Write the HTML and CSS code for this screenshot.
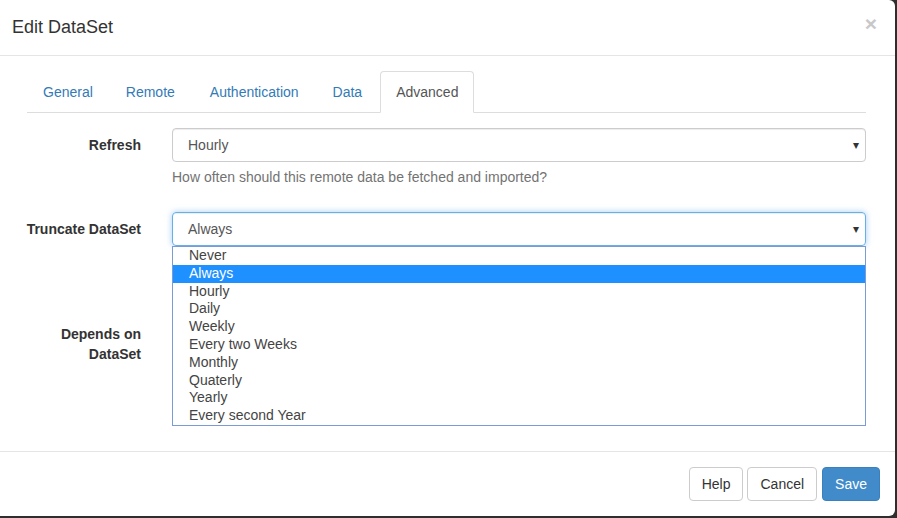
FILE: index.html
```html
<!DOCTYPE html>
<html lang="en">
<head>
<meta charset="utf-8">
<title>Edit DataSet</title>
<link rel="stylesheet" href="styles.css">
</head>
<body>
<div class="modal">
  <div class="modal-header">
    <h4 class="modal-title">Edit DataSet</h4>
    <span class="close">&times;</span>
  </div>
  <div class="modal-body">
    <ul class="tabs">
      <li><a>General</a></li>
      <li><a>Remote</a></li>
      <li><a>Authentication</a></li>
      <li><a>Data</a></li>
      <li class="active"><a>Advanced</a></li>
    </ul>
    <div class="form">
      <div class="group g-refresh">
        <label class="lbl">Refresh</label>
        <div class="ctrl">
          <div class="select">Hourly<span class="caret">&#9662;</span></div>
          <p class="help">How often should this remote data be fetched and imported?</p>
        </div>
      </div>
      <div class="group g-truncate">
        <label class="lbl">Truncate DataSet</label>
        <div class="ctrl">
          <div class="select focus">Always<span class="caret">&#9662;</span></div>
          <ul class="listbox">
            <li>Never</li>
            <li class="sel">Always</li>
            <li>Hourly</li>
            <li>Daily</li>
            <li>Weekly</li>
            <li>Every two Weeks</li>
            <li>Monthly</li>
            <li>Quaterly</li>
            <li>Yearly</li>
            <li>Every second Year</li>
          </ul>
        </div>
      </div>
      <div class="group g-depends">
        <label class="lbl">Depends on<br>DataSet</label>
        <div class="ctrl"></div>
      </div>
    </div>
  </div>
  <div class="modal-footer">
    <button class="btn">Help</button>
    <button class="btn">Cancel</button>
    <button class="btn primary">Save</button>
  </div>
</div>
</body>
</html>
```
FILE: styles.css
```css
* { box-sizing: border-box; }
html, body { margin: 0; padding: 0; }
body {
  background: #2e2e2e;
  width: 897px;
  height: 518px;
  overflow: hidden;
  font-family: "Liberation Sans", Arial, sans-serif;
  font-size: 14px;
  color: #333;
  line-height: 20px;
}
.modal {
  width: 895px;
  height: 516px;
  background: #fff;
  border-radius: 0 6px 6px 0;
  display: flex;
  flex-direction: column;
}
.modal-header {
  height: 56px;
  border-bottom: 1px solid #e5e5e5;
  padding: 15px 15px 0 12px;
  display: flex;
  justify-content: space-between;
}
.modal-title {
  margin: 0;
  font-size: 18px;
  font-weight: normal;
  line-height: 25px;
  color: #333;
}
.close {
  font-size: 21px;
  font-weight: bold;
  color: #c8c8c8;
  line-height: 18px;
  margin-right: 3px;
}
.modal-body {
  flex: 1;
  padding: 15px 29px 0 27px;
}
.tabs {
  list-style: none;
  margin: 0;
  padding: 0;
  display: flex;
  border-bottom: 1px solid #ddd;
  height: 42px;
}
.tabs li { margin-right: 2px; }
.tabs a {
  display: block;
  padding: 10px 15px;
  line-height: 20px;
  color: #337ab7;
  border: 1px solid transparent;
  border-radius: 4px 4px 0 0;
}
.tabs li:nth-child(2) a { padding-left: 14px; padding-right: 16px; }
.tabs .active a {
  color: #555;
  background: #fff;
  border-color: #ddd #ddd transparent;
  height: 42px;
}
.form { padding-top: 15px; margin-left: -20px; }
.group {
  display: flex;
  gap: 31px;
}
.lbl {
  width: 134px;
  flex: none;
  text-align: right;
  font-weight: bold;
  padding-top: 7px;
}
.ctrl { flex: 1; position: relative; }
.g-refresh { margin-bottom: 25px; }
.g-truncate { margin-bottom: 71px; }
.select {
  height: 34px;
  border: 1px solid #ccc;
  border-radius: 4px;
  padding: 6px 12px 6px 15px;
  color: #555;
  position: relative;
  box-shadow: inset 0 1px 1px rgba(0,0,0,.075);
}
.select.focus {
  border-color: #66afe9;
  box-shadow: inset 0 1px 1px rgba(0,0,0,.075), 0 0 6px rgba(102,175,233,.6);
}
.caret {
  position: absolute;
  right: 6px;
  top: 6px;
  font-size: 12px;
  color: #333;
}
.help {
  margin: 5px 0 0;
  color: #737373;
}
.listbox {
  position: absolute;
  left: 0;
  right: 0;
  top: 34px;
  margin: 0;
  padding: 0;
  list-style: none;
  background: #fff;
  border: 1px solid #7a9bd6;
  z-index: 5;
}
.listbox li {
  height: 17.8px;
  line-height: 16px;
  padding-left: 16px;
  color: #444;
}
.listbox li.sel {
  background: #1e90ff;
  color: #fff;
}
.modal-footer {
  border-top: 1px solid #e5e5e5;
  padding: 15px 15px 15px;
  display: flex;
  justify-content: flex-end;
  gap: 4px;
}
.btn {
  font-family: "Liberation Sans", Arial, sans-serif;
  font-size: 14px;
  line-height: 20px;
  height: 34px;
  padding: 6px 12px;
  border: 1px solid #ccc;
  border-radius: 4px;
  background: #fff;
  color: #333;
}
.btn.primary {
  background: #428bca;
  border-color: #3a80bd;
  color: #fff;
  margin-left: 1px;
}
```
